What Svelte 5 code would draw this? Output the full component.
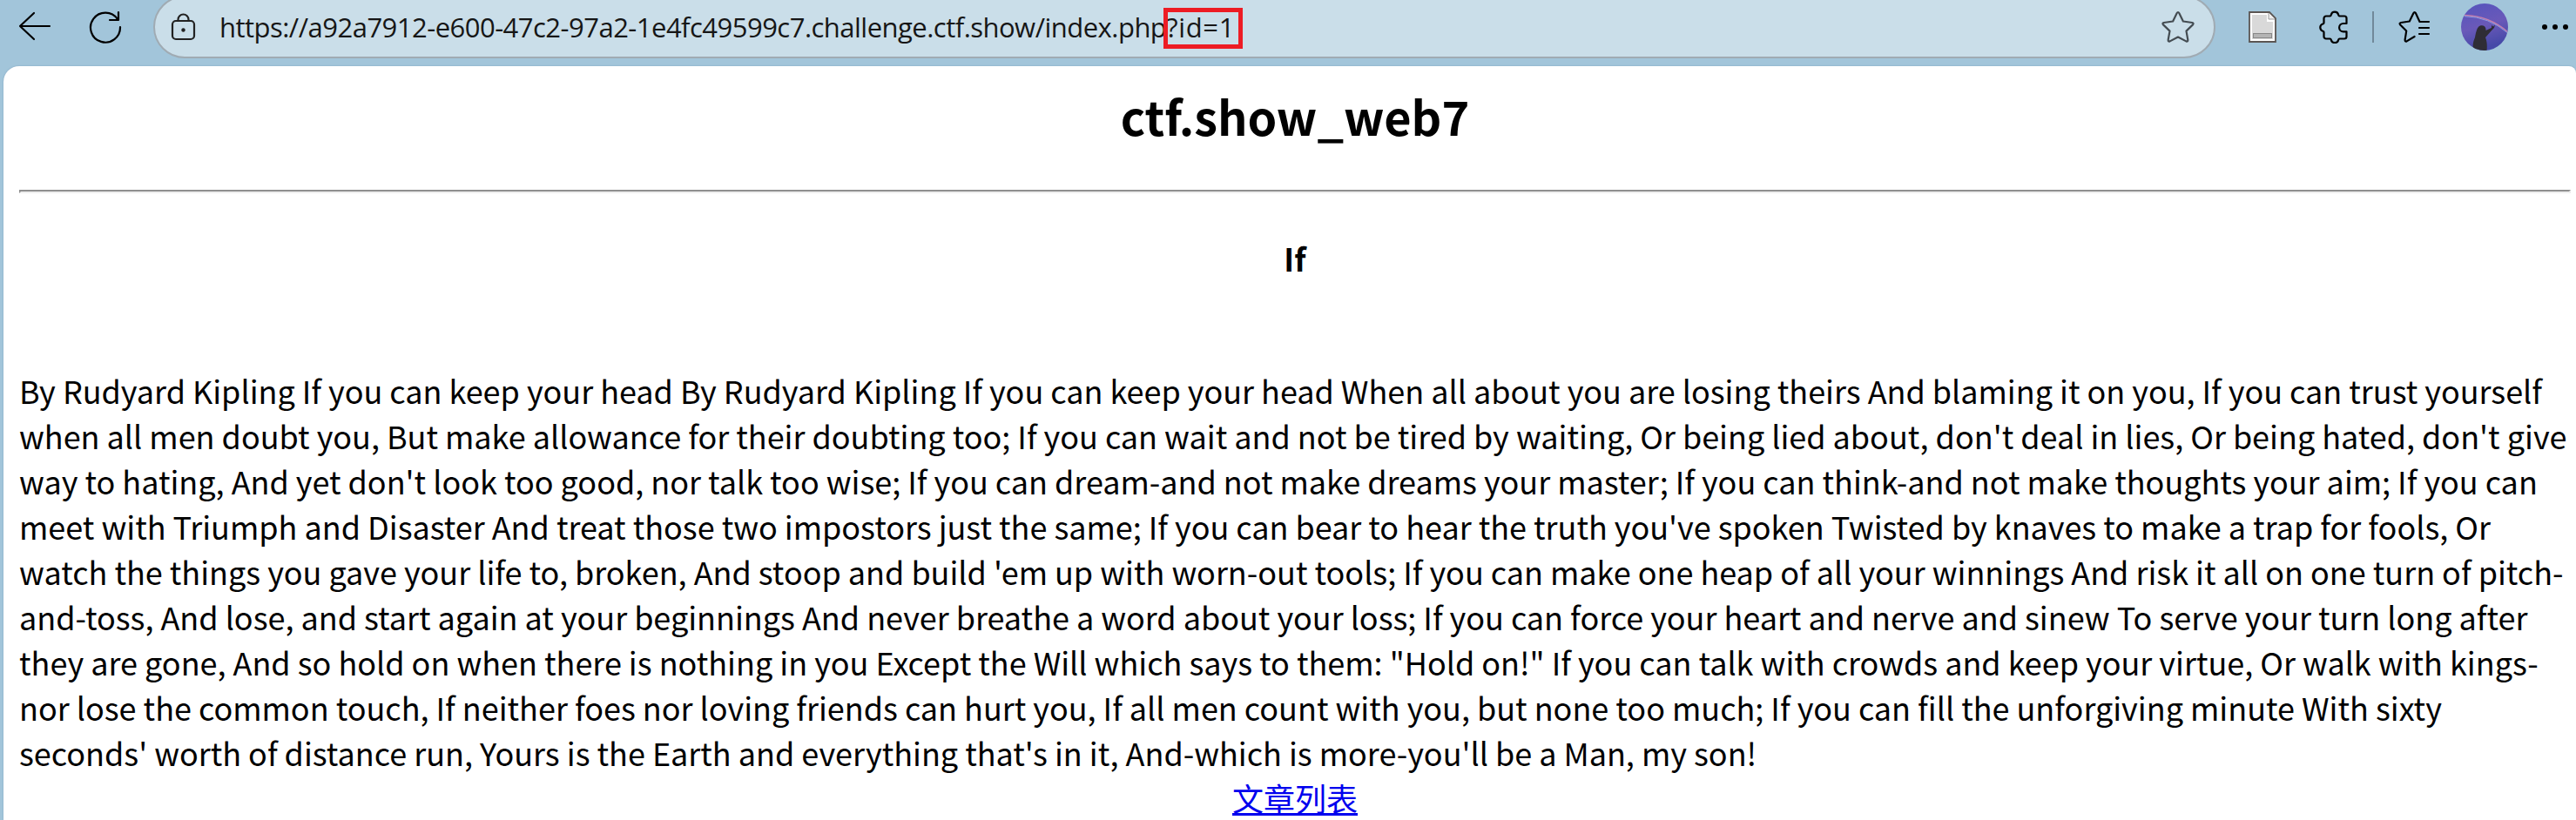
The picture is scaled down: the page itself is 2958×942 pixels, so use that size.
<script lang="ts">
  const origin = 'https://a92a7912-e600-47c2-97a2-1e4fc49599c7.challenge.ctf.show';
  const path = '/index.php';
  const query = '?id=1';

  const article = {
    title: 'If',
    body: `By Rudyard Kipling If you can keep your head By Rudyard Kipling If you can keep your head When all about you are losing theirs And blaming it on you, If you can trust yourself when all men doubt you, But make allowance for their doubting too; If you can wait and not be tired by waiting, Or being lied about, don't deal in lies, Or being hated, don't give way to hating, And yet don't look too good, nor talk too wise; If you can dream-and not make dreams your master; If you can think-and not make thoughts your aim; If you can meet with Triumph and Disaster And treat those two impostors just the same; If you can bear to hear the truth you've spoken Twisted by knaves to make a trap for fools, Or watch the things you gave your life to, broken, And stoop and build 'em up with worn-out tools; If you can make one heap of all your winnings And risk it all on one turn of pitch-and-toss, And lose, and start again at your beginnings And never breathe a word about your loss; If you can force your heart and nerve and sinew To serve your turn long after they are gone, And so hold on when there is nothing in you Except the Will which says to them: "Hold on!" If you can talk with crowds and keep your virtue, Or walk with kings-nor lose the common touch, If neither foes nor loving friends can hurt you, If all men count with you, but none too much; If you can fill the unforgiving minute With sixty seconds' worth of distance run, Yours is the Earth and everything that's in it, And-which is more-you'll be a Man, my son!`
  };
</script>

<div class="browser">
  <header class="toolbar">
    <svg class="icon back" viewBox="0 0 40 40" aria-label="Back">
      <path d="M37 19H3M19 4 3 19l16 15" />
    </svg>
    <svg class="icon reload" viewBox="0 0 40 40" aria-label="Reload">
      <path d="M37 20A17 17 0 1 1 34 11M35 3v9H25" />
    </svg>

    <div class="address">
      <svg class="icon lock" viewBox="0 0 30 32" aria-hidden="true">
        <rect x="2" y="9" width="25" height="21" rx="4" />
        <path d="M8.500 9V7.500a6 6 0 0 1 12 0V9" />
        <circle class="solid" cx="14.500" cy="19.500" r="2.200" />
      </svg>
      <span class="url">{origin}{path}<span class="query">{query}</span></span>
      <svg class="icon star" viewBox="0 0 38 38" aria-label="Favorite">
        <path d="M17.600 3.200q1.400-2.400 2.800 0l4.500 9.300 10.300 1.500q2.300.500.800 2.400l-7.500 7.200 1.800 10.200q.2 2.400-2 1.600L19 30.500l-9.300 4.900q-2.200.8-2-1.600l1.800-10.200L2 16.400q-1.500-1.900.8-2.400l10.300-1.500z" />
      </svg>
    </div>

    <svg class="page-icon" viewBox="0 0 32 36" aria-hidden="true">
      <path d="M1 1h23l7 7v27H1z" fill="#fff" stroke="#5b5653" stroke-width="1.800" />
      <path d="M4 4h17v8h7v20H4z" fill="#d9d9d9" />
      <path d="M23 2v7h7" fill="#eee" stroke="#999" stroke-width="1" />
      <rect x="5.500" y="25.500" width="21" height="5" fill="#b4b4b4" stroke="#888" />
    </svg>
    <svg class="icon puzzle" viewBox="0 0 34 38" aria-label="Extensions">
      <path d="M8 6.500h4.500q1 0 1.300-1.500a4.300 4.300 0 0 1 8.400 0q.3 1.500 1.300 1.500H29a2.500 2.500 0 0 1 2.500 2.500v6h-3.700a4.700 4.700 0 0 0 0 9.400h3.700V30a2.500 2.500 0 0 1-2.500 2.500h-5.500q-1 0-1.300 1.200a4.300 4.300 0 0 1-8.400 0q-.3-1.200-1.300-1.200H8A2.500 2.500 0 0 1 5.500 30v-5q0-1-1.200-1.300a4.300 4.300 0 0 1 0-8.200q1.200-.3 1.200-1.300V9A2.500 2.500 0 0 1 8 6.500z" />
    </svg>
    <span class="divider"></span>
    <svg class="icon favorites" viewBox="0 0 38 38" aria-label="Favorites">
      <path d="M35 13H24.500L20 3.200q-1.400-2.200-2.700 0L12.800 12.500 3 14q-2.400.6-.8 2.400l7 7.200-1.600 10.200q0 2.400 2 1.600l9-5.400M24 20h11M24 27h11" />
    </svg>
    <svg class="avatar" viewBox="0 0 54 54" aria-label="Profile">
      <defs>
        <linearGradient id="sky" x1="0" y1="0" x2="0.300" y2="1">
          <stop offset="0" stop-color="#5454bd" />
          <stop offset="0.550" stop-color="#6a59b9" />
          <stop offset="1" stop-color="#4649a8" />
        </linearGradient>
        <clipPath id="round"><circle cx="27" cy="27" r="27" /></clipPath>
      </defs>
      <g clip-path="url(#round)">
        <rect width="54" height="54" fill="url(#sky)" />
        <path d="M4 13.500Q32 14 54 33" fill="none" stroke="#c47fae" stroke-width="1.300" />
        <path d="M4 14.700Q32 15.200 54 34.200" fill="none" stroke="#8d9de0" stroke-width="1" />
        <path d="M14 54c-1-7 0-10 2-15 1-5 2-12 6-13.500 4-1 7 1.500 6.500 5.500L35 28l0-3 2 1.500 2-2-1 3.500-2 2-8 9c2 5 2 10 1.500 16z" fill="#2f2d36" />
      </g>
    </svg>
    <svg class="dots" viewBox="0 0 32 8" aria-label="Settings and more">
      <circle cx="4" cy="4" r="3" />
      <circle cx="16" cy="4" r="3" />
      <circle cx="28" cy="4" r="3" />
    </svg>
  </header>

  <main class="page">
    <h2>ctf.show_web7</h2>
    <hr />
    <h4>{article.title}</h4>
    <br />
    <p>{article.body}</p>
    <a href="#list">文章列表</a>
  </main>
</div>

<style>
  :global(body) {
    background: #a2c5da;
    overflow: hidden;
  }

  .browser {
    display: flex;
    flex-direction: column;
    height: 942px;
    overflow: hidden;
    background: #a2c5da;
  }

  .toolbar {
    display: flex;
    align-items: center;
    flex: none;
    height: 76px;
    box-sizing: border-box;
    padding: 0 0 14px 20px;
  }

  .toolbar svg {
    flex: none;
  }

  .icon {
    fill: none;
    stroke: #000;
    stroke-width: 2.2;
    stroke-linecap: round;
    stroke-linejoin: round;
  }

  .back,
  .reload {
    width: 40px;
    height: 40px;
  }

  .reload {
    margin-left: 41px;
  }

  .address {
    display: flex;
    flex: none;
    align-items: center;
    width: 2368px;
    height: 72px;
    margin: 0 38px 0 35px;
    padding: 0 22px 0 18px;
    box-sizing: border-box;
    border: 2px solid #a0abb3;
    border-radius: 36px;
    background: #cadee9;
  }

  .lock {
    width: 30px;
    height: 32px;
    stroke: #222;
  }

  .solid {
    fill: #222;
    stroke: none;
  }

  .url {
    flex: 1;
    margin-left: 26px;
    color: #161616;
    font: 31px/40px 'Open Sans', sans-serif;
    letter-spacing: -0.52px;
    white-space: nowrap;
  }

  .query {
    position: relative;
    letter-spacing: 0.6px;
  }

  /* red marker drawn round the query string */
  .query::after {
    content: '';
    position: absolute;
    inset: -1px -9px -4px -3px;
    border: 5px solid #ed1c24;
  }

  .star {
    width: 38px;
    height: 38px;
    stroke: #444c52;
  }

  .page-icon {
    width: 32px;
    height: 36px;
  }

  .puzzle {
    width: 34px;
    height: 38px;
    margin-left: 49px;
  }

  .divider {
    flex: none;
    width: 2px;
    height: 36px;
    margin: 0 28px 0 27px;
    background: #71899a;
  }

  .favorites {
    width: 38px;
    height: 38px;
  }

  .avatar {
    width: 54px;
    height: 54px;
    margin-left: 34px;
  }

  .dots {
    width: 32px;
    height: 8px;
    margin-left: 38px;
  }

  .page {
    flex: 1;
    min-height: 0;
    margin-left: 4px;
    padding: 18px 6px 0 18px;
    border-radius: 18px 8px 0 0;
    background: #fff;
    box-shadow: 0 0 2px #7fa3bd;
    color: #000;
    font: 36px/52px 'Noto Sans CJK SC', sans-serif;
    text-align: center;
  }

  h2 {
    margin: 0 0 46px;
    font-size: 54px;
    line-height: 78px;
  }

  hr {
    height: 0;
    margin: 0;
    border: 2px solid;
    border-color: #8f8f8f #eee #eee #8f8f8f;
  }

  h4 {
    margin: 48px 0;
    font-size: 36px;
  }

  p {
    margin: 0;
    letter-spacing: -0.015px;
    text-align: left;
  }

  a {
    color: #00e;
  }
</style>
